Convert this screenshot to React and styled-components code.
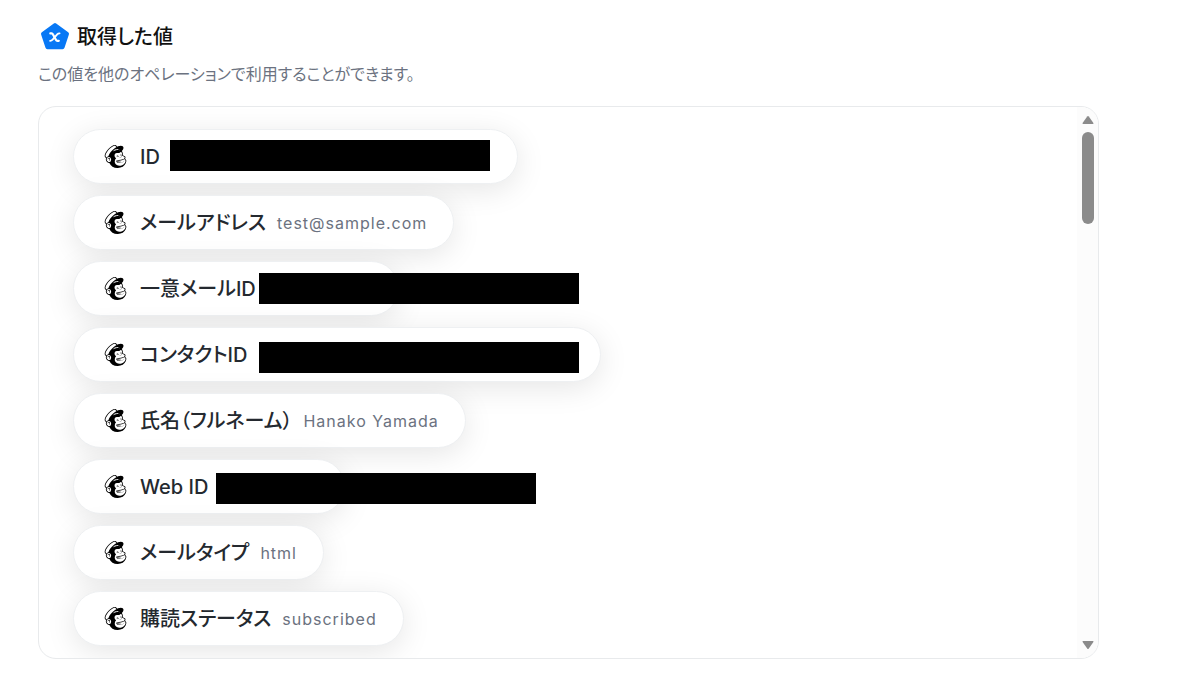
import React from 'react';
import styled, { createGlobalStyle } from 'styled-components';
import { SiMailchimp } from 'react-icons/si';

const GlobalStyle = createGlobalStyle`
  *, *::before, *::after { box-sizing: border-box; }
  body {
    margin: 0;
    background: #ffffff;
    font-family: Inter, "Noto Sans CJK JP", sans-serif;
    font-feature-settings: "palt";
  }
`;

const Page = styled.main`
  display: flex;
  flex-direction: column;
  height: 100vh;
  min-height: 360px;
  padding: 20px 83px 23px 38px;
`;

const Header = styled.header`
  display: flex;
  align-items: center;
  gap: 7px;
  height: 34px;
  padding-left: 2px;
`;

const HeaderIcon = styled.svg`
  width: 30px;
  height: 30px;
  flex: none;
`;

const Title = styled.h1`
  margin: 0;
  font-size: 20px;
  line-height: 32px;
  font-weight: 500;
  color: #111111;
`;

const Description = styled.p`
  margin: 8px 0 20px;
  font-size: 16px;
  line-height: 24px;
  color: #6b7280;
`;

const Panel = styled.section`
  display: flex;
  flex: 1;
  min-height: 0;
  border: 1px solid #e8eaec;
  border-radius: 18px;
  overflow: hidden;
`;

const ValueList = styled.ul`
  flex: 1;
  min-width: 0;
  display: flex;
  flex-direction: column;
  align-items: flex-start;
  gap: 11px;
  margin: 0;
  padding: 22px 34px 0;
  overflow: hidden;
  list-style: none;
`;

const Pill = styled.li`
  display: flex;
  align-items: center;
  flex: none;
  height: 55px;
  padding: 0 26px 0 30px;
  border: 1px solid #eef0f2;
  border-radius: 28px;
  background: #ffffff;
  box-shadow: 0 6px 30px rgba(0, 0, 0, 0.1);
  white-space: nowrap;
`;

const Logo = styled(SiMailchimp)`
  width: 23px;
  height: 23px;
  margin-right: 13px;
  color: #000000;
`;

const Label = styled.span`
  margin-right: 11px;
  font-size: 20px;
  line-height: 28px;
  font-weight: 500;
  color: #24292f;
`;

const Value = styled.span`
  font-size: 16px;
  line-height: 28px;
  letter-spacing: 1px;
  color: #6b7280;
`;

const HiddenValue = styled.span`
  position: relative;
  width: ${({ $width }) => $width}px;
  height: 31px;
`;

const Mask = styled.span`
  position: absolute;
  z-index: 1;
  top: ${({ $top }) => $top}px;
  left: ${({ $left }) => $left}px;
  width: 320px;
  height: 31px;
  background: #000000;
`;

const Scrollbar = styled.div`
  display: flex;
  flex-direction: column;
  align-items: center;
  flex: none;
  width: 21px;
  padding: 8px 0;
  background: #fcfcfc;
`;

const ScrollArrow = styled.svg`
  width: 12px;
  height: 10px;
  flex: none;
  fill: #8b8b8b;
  transform: ${({ $down }) => ($down ? 'rotate(180deg)' : 'none')};
`;

const Track = styled.div`
  flex: 1;
  width: 12px;
  padding: 7px 0;
`;

const Thumb = styled.div`
  height: 92px;
  border-radius: 6px;
  background: #8b8b8b;
`;

const values = [
  { label: 'ID', mask: { width: 320, left: -1, top: -1 } },
  { label: 'メールアドレス', value: 'test@sample.com' },
  { label: '一意メールID', mask: { width: 105, left: -8, top: 0 } },
  { label: 'コンタクトID', mask: { width: 316, left: 1, top: 3 } },
  { label: '氏名（フルネーム）', value: 'Hanako Yamada' },
  { label: 'Web ID', mask: { width: 99, left: -3, top: 2 } },
  { label: 'メールタイプ', value: 'html' },
  { label: '購読ステータス', value: 'subscribed' },
];

function VariableIcon() {
  return (
    <HeaderIcon viewBox="0 1 30 30" aria-hidden="true">
      <path
        d="M15 4 27 12.800 22.600 26.200H7.400L3 12.800Z"
        fill="#0878f5"
        stroke="#0878f5"
        strokeWidth="4"
        strokeLinejoin="round"
      />
      <g fill="none" stroke="#ffffff" strokeWidth="1.800" strokeLinecap="round">
        <path d="M10.300 12.400H11.600Q12.500 12.400 13 13.400L15.900 18.800Q16.400 19.800 17.400 19.800H18.800" strokeWidth="2.200" />
        <path d="M19.600 12.300Q18.200 12.200 17.200 13.400L12.600 18.700Q11.500 19.900 10.100 19.800" />
      </g>
    </HeaderIcon>
  );
}

function ValuePill({ label, value, mask }) {
  return (
    <Pill>
      <Logo aria-hidden="true" />
      <Label>{label}</Label>
      {mask ? (
        <HiddenValue $width={mask.width}>
          <Mask $left={mask.left} $top={mask.top} />
        </HiddenValue>
      ) : (
        <Value>{value}</Value>
      )}
    </Pill>
  );
}

function Arrow({ down }) {
  return (
    <ScrollArrow $down={down} viewBox="0 0 12 10">
      <path d="M5.200 1.600Q6 .600 6.800 1.600L11.400 8Q11.900 9 10.900 9H1.100Q.100 9 .600 8Z" />
    </ScrollArrow>
  );
}

export default function App() {
  return (
    <>
      <GlobalStyle />
      <Page lang="ja">
        <Header>
          <VariableIcon />
          <Title>取得した値</Title>
        </Header>
        <Description>この値を他のオペレーションで利用することができます。</Description>
        <Panel>
          <ValueList>
            {values.map((item) => (
              <ValuePill key={item.label} {...item} />
            ))}
          </ValueList>
          <Scrollbar aria-hidden="true">
            <Arrow />
            <Track>
              <Thumb />
            </Track>
            <Arrow down />
          </Scrollbar>
        </Panel>
      </Page>
    </>
  );
}
